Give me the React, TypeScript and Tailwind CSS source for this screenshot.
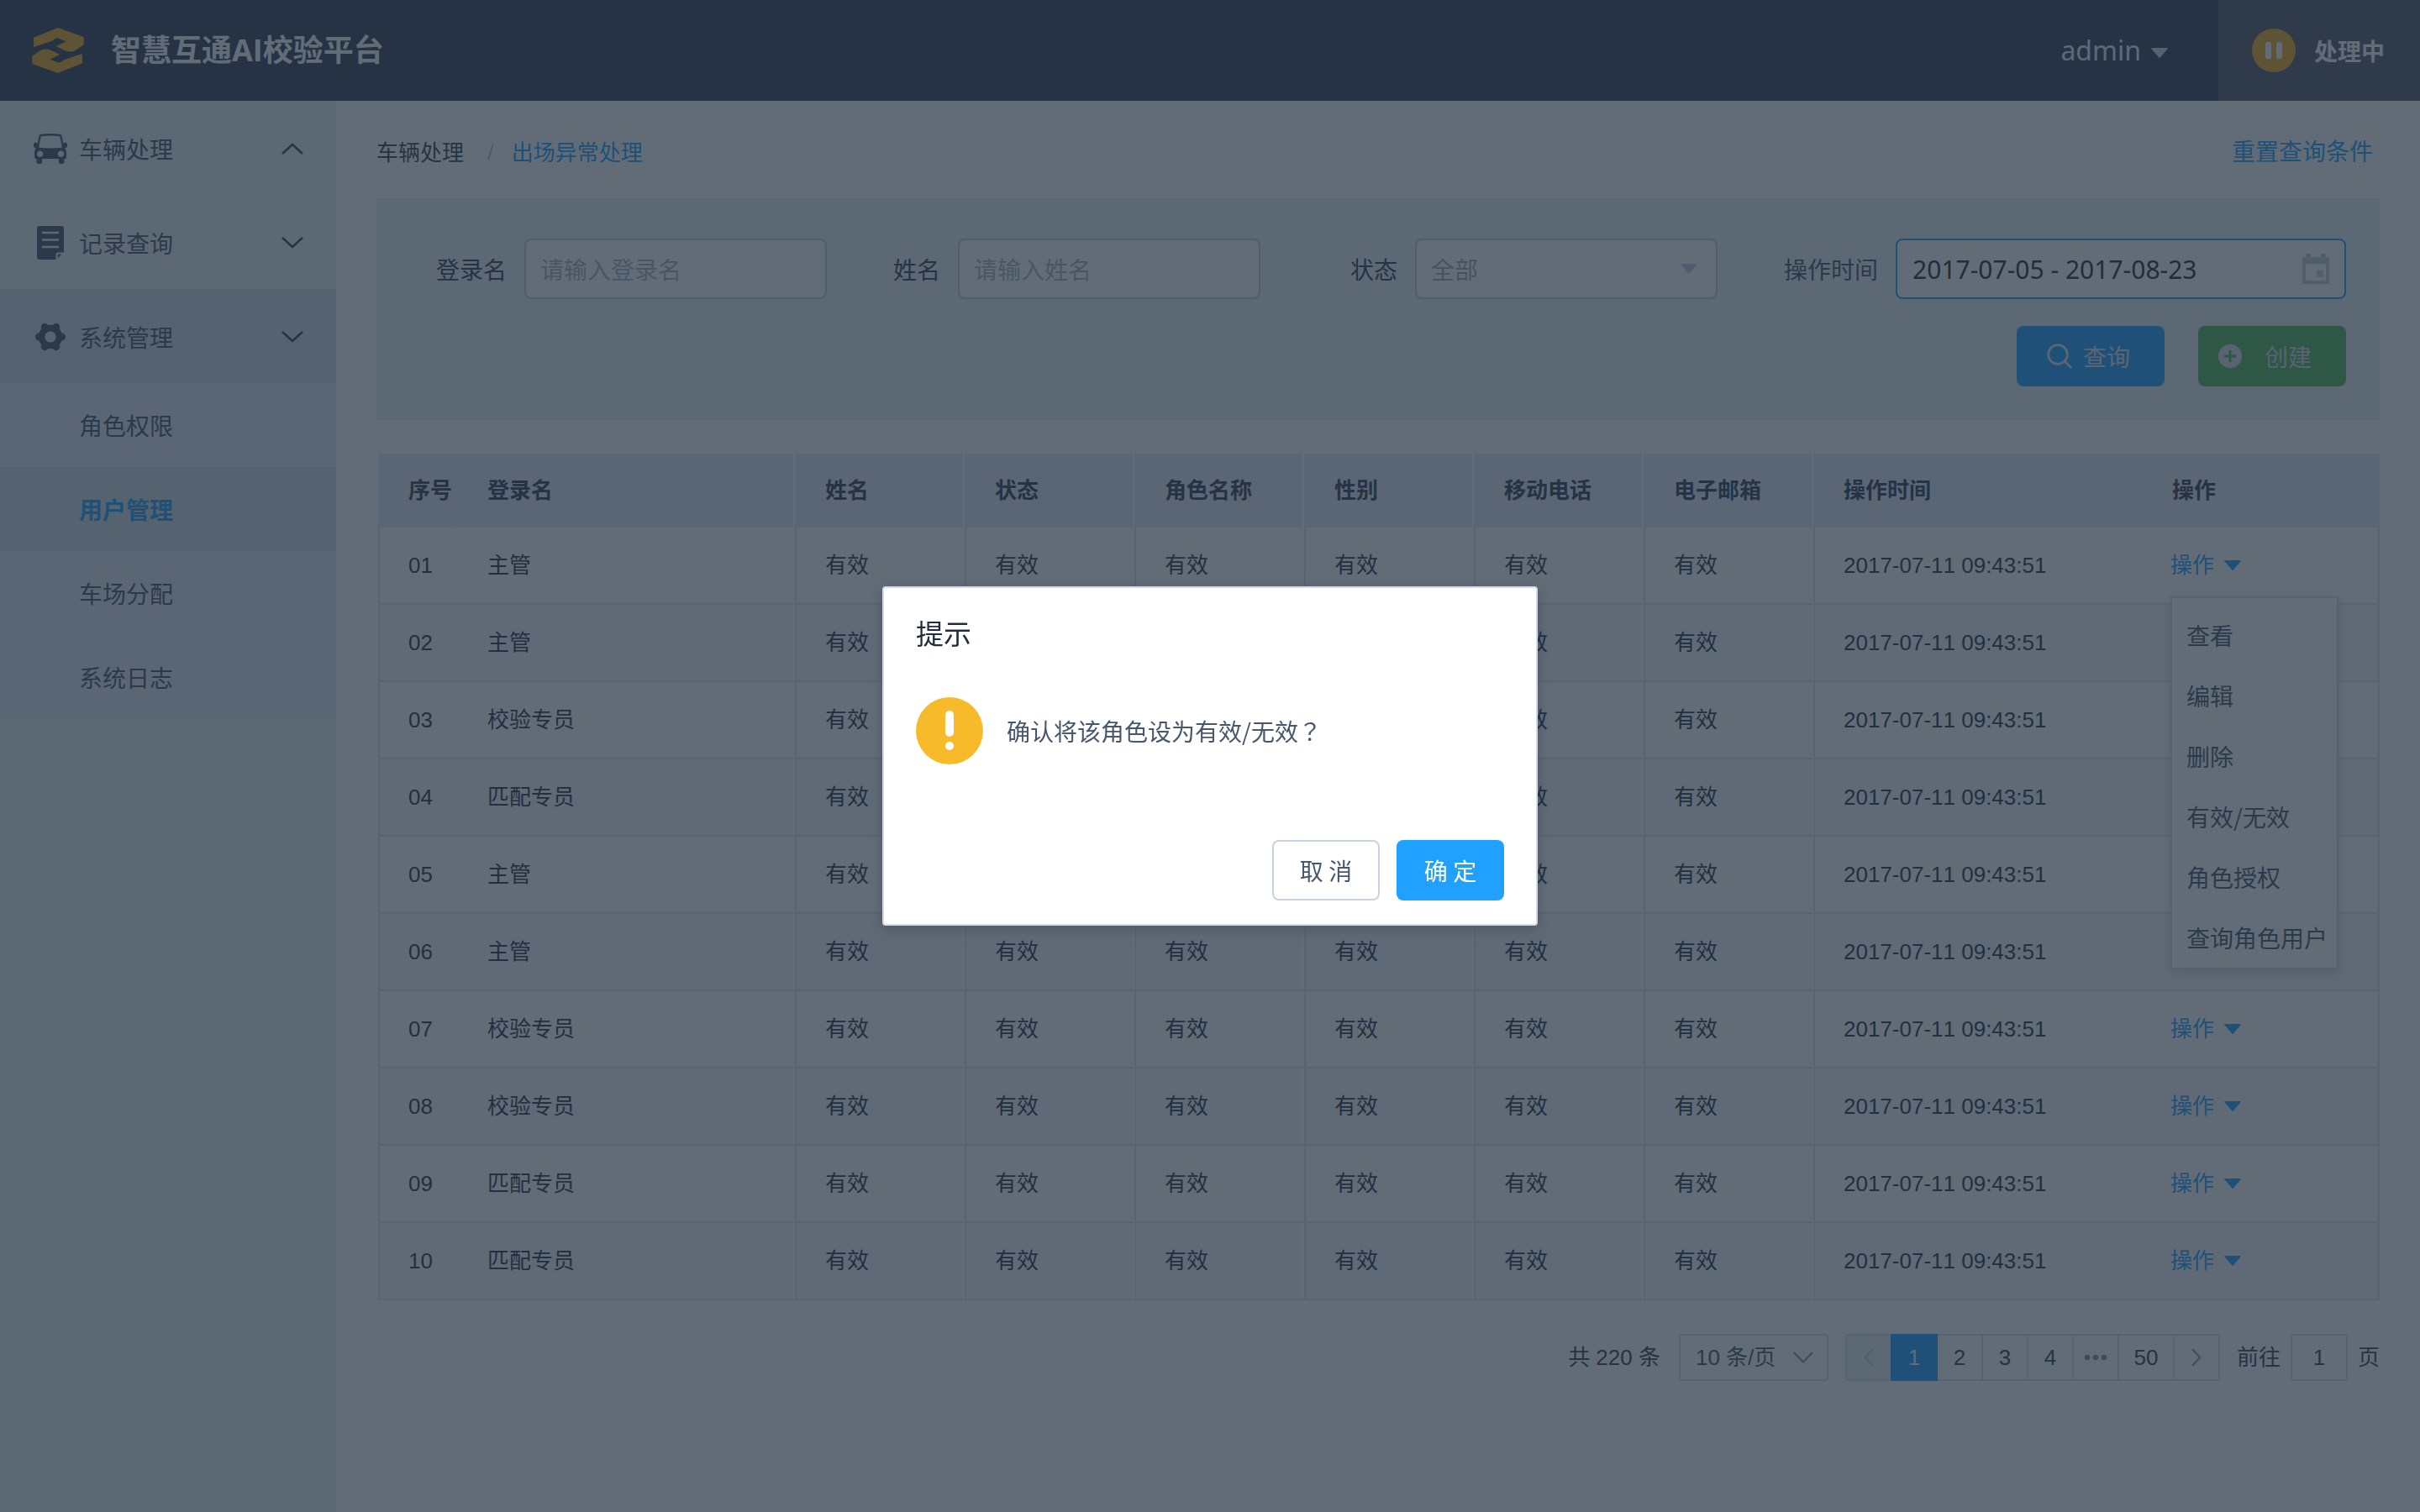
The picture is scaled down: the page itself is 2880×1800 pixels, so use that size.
import React from 'react';

const CJK = "font-['Noto_Sans_CJK_SC',sans-serif]";
const LATIN = "font-['Liberation_Sans','Noto_Sans_CJK_SC',sans-serif] [font-kerning:none]";

function Logo() {
  const hand =
    'M120 137 L207 102 L299 135 L299 163 L266 185 Q250 190 232 184 L200 168 L236 151 L205 139 Q196 141 188 148 L160 158 L120 171 Z';
  return (
    <svg viewBox="114 102 186 162" className="h-[54px] w-[62px]" fill="#f0ac23" aria-hidden="true">
      <path d={hand} />
      <path d={hand} transform="rotate(180 207 183)" />
    </svg>
  );
}

function CarIcon() {
  return (
    <svg viewBox="0 0 40 36" className="h-9 w-10" fill="#48576a" aria-hidden="true">
      <path
        fillRule="evenodd"
        d="M9 .8 Q20 -.6 31 .8 Q33 1 33.600 3 L35.600 12 Q36 10.500 38 10.500 Q40 10.500 40 13 V15 Q40 17 38 17.200 H37 Q39 19 39 22 V28.500 Q39 30 37.500 30 H36.500 V34 Q36.500 36 34.500 36 H31.500 Q29.800 36 29.800 34 V30 H10.200 V34 Q10.200 36 8.500 36 H5.500 Q3.500 36 3.500 34 V30 H2.500 Q1 30 1 28.500 V22 Q1 19 3 17.200 H2 Q0 17 0 15 V13 Q0 10.500 2 10.500 Q4 10.500 4.400 12 L6.400 3 Q7 1 9 .8 Z M9.300 3.200 Q8.700 3.300 8.500 4 L6.200 16.500 Q20 18.500 33.800 16.500 L31.500 4 Q31.300 3.300 30.700 3.200 Q20 1.800 9.300 3.200 Z M7.600 20.500 A3.700 3.700 0 1 0 7.700 20.500 Z M32.400 20.500 A3.700 3.700 0 1 0 32.500 20.500 Z"
      />
    </svg>
  );
}

function RecordIcon() {
  return (
    <svg viewBox="0 0 32 40" className="mx-1 h-10 w-8" aria-hidden="true">
      <path d="M3 0 H29 Q32 0 32 3 V31.500 H25 Q22.500 31.500 22.500 34 V40 H3 Q0 40 0 37 V3 Q0 0 3 0 Z" fill="#48576a" />
      <path d="M24.500 38.500 V35 Q24.500 33.500 26 33.500 H29.500 Z" fill="#48576a" />
      <path d="M6 8 H26 M6 16.500 H26 M6 25 H26" stroke="#eff2f7" strokeWidth="2.600" />
    </svg>
  );
}

function GearIcon() {
  return (
    <svg viewBox="-20 -18 40 36" className="h-9 w-10" stroke="#48576a" fill="none" aria-hidden="true">
      <circle r="10.400" strokeWidth="7.600" />
      {[0, 60, 120, 180, 240, 300].map((a) => (
        <path key={a} d="M12.500 0 H13.500" strokeWidth="9" strokeLinecap="round" transform={`rotate(${a})`} />
      ))}
    </svg>
  );
}

function Chevron({ up = false }: { up?: boolean }) {
  return (
    <svg viewBox="0 0 26 14" className="h-3.5 w-[26px]" fill="none" stroke="#324157" strokeWidth="2.400" aria-hidden="true">
      <path d={up ? 'M1 13 L13 2 L25 13' : 'M1 1 L13 12 L25 1'} />
    </svg>
  );
}

function Caret({ className }: { className: string }) {
  return (
    <svg viewBox="0 0 20 12" className={className} fill="currentColor" aria-hidden="true">
      <path d="M1 0 H19 Q20.500 0 19.500 1.200 L11 11.300 Q10 12.400 9 11.300 L.5 1.200 Q-.5 0 1 0 Z" />
    </svg>
  );
}

const MENU = [
  { label: '车辆处理', Icon: CarIcon, up: true, active: false },
  { label: '记录查询', Icon: RecordIcon, up: false, active: false },
  { label: '系统管理', Icon: GearIcon, up: false, active: true },
];
const SUBMENU = ['角色权限', '用户管理', '车场分配', '系统日志'];

function Sidebar() {
  return (
    <nav className="w-[400px] shrink-0 bg-[#eff2f7] text-[28px] text-[#48576a]">
      {MENU.map(({ label, Icon, up, active }) => (
        <button
          key={label}
          type="button"
          className={`flex h-28 w-full items-center pt-0.5 pr-[39px] pl-10 ${active ? 'bg-[#d3dfe6]' : ''}`}
        >
          <Icon />
          <span className="ml-3.5 flex-1 text-left">{label}</span>
          <Chevron up={up} />
        </button>
      ))}
      <div className="bg-[#e5e9f2]">
        {SUBMENU.map((label) => (
          <a
            key={label}
            href="#"
            className={`flex h-[100px] items-center pl-[94px] ${
              label === '用户管理' ? 'bg-[#d3dfe6] font-bold text-[#20a0ff]' : ''
            }`}
          >
            {label}
          </a>
        ))}
      </div>
    </nav>
  );
}

function Header() {
  return (
    <header className="flex h-[120px] items-stretch bg-[#324157] text-white">
      <div className="flex flex-1 items-center pl-[38px]">
        <Logo />
        <h1 className="ml-8 font-['Open_Sans','Noto_Sans_CJK_SC',sans-serif] text-[36px] font-bold">智慧互通AI校验平台</h1>
      </div>
      <button
        type="button"
        className="mr-[60px] flex items-center gap-3 font-['Noto_Sans',sans-serif] text-[32px] text-[#eff2f7]"
      >
        admin
        <Caret className="mt-1.5 h-3 w-5 text-[#d3dce6]" />
      </button>
      <div className="flex w-60 items-center bg-[#545c6c] pl-10">
        <svg viewBox="0 0 52 52" className="size-13" aria-hidden="true">
          <circle cx="26" cy="26" r="26" fill="#f0ac23" />
          <rect x="16" y="16" width="7" height="20" rx="2.500" fill="#fff" />
          <rect x="29" y="16" width="7" height="20" rx="2.500" fill="#fff" />
        </svg>
        <span className="ml-[22px] text-[28px] font-bold">处理中</span>
      </div>
    </header>
  );
}

function Filters() {
  const field = 'h-[72px] w-[360px] rounded-lg border-2 border-[#c0ccda] bg-white px-[17px] placeholder:text-[#a5b3c6]';
  return (
    <form className="bg-[#eff2f7] pt-12 pr-10 pb-10 pl-[71px] text-[28px] text-[#324157]">
      <div className="flex items-center">
        <label htmlFor="login" className="mr-[21px]">登录名</label>
        <input id="login" placeholder="请输入登录名" className={field} />
        <label htmlFor="name" className="mr-[21px] ml-[79px]">姓名</label>
        <input id="name" placeholder="请输入姓名" className={field} />
        <label htmlFor="status" className="mr-[21px] ml-[107px]">状态</label>
        <div className="relative">
          <select id="status" className={`${field} appearance-none text-[#99a9bf]`}>
            <option>全部</option>
          </select>
          <Caret className="pointer-events-none absolute top-[30px] right-6 h-3 w-5 text-[#c0ccda]" />
        </div>
        <label htmlFor="period" className="mr-[21px] ml-[79px] text-[#48576a]">操作时间</label>
        <div className="relative flex-1">
          <input
            id="period"
            defaultValue="2017-07-05 - 2017-08-23"
            className="h-[72px] w-full rounded-lg border-2 border-[#20a0ff] bg-white px-[18px] font-['Noto_Sans',sans-serif] text-[30px] text-[#1f2d3d]"
          />
          <svg viewBox="0 0 32 36" className="pointer-events-none absolute top-[18px] right-5 h-9 w-8" fill="#c0ccda" aria-hidden="true">
            <path
              fillRule="evenodd"
              d="M4 0 H10 V4 H22 V0 H28 V4 H30 Q32 4 32 6 V34 Q32 36 30 36 H2 Q0 36 0 34 V6 Q0 4 2 4 H4 Z M4 12 V32 H28 V12 Z"
            />
            <rect x="17" y="20" width="8" height="8" />
          </svg>
        </div>
      </div>
      <div className="mt-8 flex justify-end gap-10 text-[#e5e9f2]">
        <button type="button" className="flex h-[72px] w-44 items-center rounded-lg bg-[#20a0ff] pl-9">
          <svg viewBox="0 0 30 30" className="size-[30px]" fill="none" stroke="currentColor" strokeWidth="2.800" aria-hidden="true">
            <circle cx="13" cy="13" r="11.300" />
            <path d="M21 21 L29 29" />
          </svg>
          <span className="ml-[13px]">查询</span>
        </button>
        <button type="button" className="flex h-[72px] w-44 items-center rounded-lg bg-[#53b85a] pl-6 text-[#dbe1ea]">
          <svg viewBox="0 0 28 28" className="size-7" aria-hidden="true">
            <circle cx="14" cy="14" r="14" fill="currentColor" />
            <path d="M14 7 V21 M7 14 H21" stroke="#53b85a" strokeWidth="3" />
          </svg>
          <span className="ml-[27px]">创建</span>
        </button>
      </div>
    </form>
  );
}

const ROWS = ['主管', '主管', '校验专员', '匹配专员', '主管', '主管', '校验专员', '校验专员', '匹配专员', '匹配专员'];
const MIDDLE = ['姓名', '状态', '角色名称', '性别', '移动电话', '电子邮箱'];
const ACTIONS = ['查看', '编辑', '删除', '有效/无效', '角色授权', '查询角色用户'];

function ActionMenu() {
  return (
    <ul
      className={`absolute top-[55px] left-0 z-10 w-[200px] border-2 border-[#d3dce6] bg-white pt-2 text-[28px] text-[#48576a] shadow-[0_4px_12px_rgba(31,45,61,0.2)] ${CJK}`}
    >
      {ACTIONS.map((label) => (
        <li key={label}>
          <button type="button" className="flex h-[72px] w-full items-center pl-[17px] whitespace-nowrap">
            {label}
          </button>
        </li>
      ))}
    </ul>
  );
}

function UserTable() {
  const th = 'border-r-2 border-white pl-9 text-left';
  const td = 'border-b-2 border-b-[#dde4ec] pl-[34px] border-l-2 border-l-[#dde4ec] border-r-2 border-r-white';
  return (
    <table
      className={`mt-10 ml-0.5 w-[calc(100%-2px)] table-fixed border-separate border-spacing-0 text-[26px] text-[#253446] ${LATIN}`}
    >
      <colgroup>
        <col className="w-[94px]" />
        <col className="w-[402px]" />
        {MIDDLE.map((m) => (
          <col key={m} className="w-[202px]" />
        ))}
        <col className="w-[391px]" />
        <col />
      </colgroup>
      <thead>
        <tr className="h-[88px] bg-[#e5e9f2] text-[#324157]">
          <th className="pl-9 text-left">序号</th>
          <th className={th}>登录名</th>
          {MIDDLE.map((m) => (
            <th key={m} className={th}>{m}</th>
          ))}
          <th className="pl-9 text-left">操作时间</th>
          <th className="pl-9 text-left">操作</th>
        </tr>
      </thead>
      <tbody>
        {ROWS.map((role, i) => (
          <tr key={i} className="h-[92px] even:bg-[#f6f8fb]">
            <td className="border-r border-b-2 border-l-2 border-r-[#f6f8fb] border-b-[#dde4ec] border-l-[#dde4ec] pl-[34px]">
              {String(i + 1).padStart(2, '0')}
            </td>
            <td className="border-r-2 border-b-2 border-r-white border-b-[#dde4ec] pl-9">{role}</td>
            {MIDDLE.map((m) => (
              <td key={m} className={td}>有效</td>
            ))}
            <td className="border-b-2 border-l-2 border-b-[#dde4ec] border-l-[#dde4ec] pl-[34px]">2017-07-11 09:43:51</td>
            <td className="border-r-2 border-b-2 border-r-[#dde4ec] border-b-[#dde4ec] pl-[34px]">
              <div className="relative flex">
                <button type="button" className="flex h-9 items-center gap-3 text-[#20a0ff]">
                  操作
                  <Caret className="h-3 w-5" />
                </button>
                {i === 0 && <ActionMenu />}
              </div>
            </td>
          </tr>
        ))}
      </tbody>
    </table>
  );
}

function Pagination() {
  const cell = 'flex h-14 w-[54px] items-center justify-center border-r-2 border-[#d3dce6]';
  return (
    <div className={`mt-10 flex items-center justify-end text-[26px] text-[#324157] ${LATIN}`}>
      <span>共 220 条</span>
      <div className="relative ml-[22px]">
        <select aria-label="每页条数" className="h-14 w-[178px] appearance-none rounded-sm border-2 border-[#d3dce6] bg-white pl-[18px] text-[#48576a]">
          <option>10 条/页</option>
        </select>
        <svg viewBox="0 0 24 14" className="pointer-events-none absolute top-[21px] right-[18px] h-3.5 w-6" fill="none" stroke="#8492a6" strokeWidth="2.200" aria-hidden="true">
          <path d="M1 1 L12 12.500 L23 1" />
        </svg>
      </div>
      <nav className="ml-5 flex h-14 items-center rounded-sm border-2 border-[#d3dce6] bg-white">
        <button type="button" aria-label="上一页" className="flex h-[52px] w-[52px] items-center justify-center bg-[#eff2f7]">
          <svg viewBox="0 0 12 22" className="h-[22px] w-3" fill="none" stroke="#c0ccda" strokeWidth="2.200">
            <path d="M11 1 L2 11 L11 21" />
          </svg>
        </button>
        <button type="button" className="flex h-14 w-14 items-center justify-center bg-[#20a0ff] text-white">1</button>
        <button type="button" className={cell}>2</button>
        <button type="button" className={cell}>3</button>
        <button type="button" className={cell}>4</button>
        <button type="button" aria-label="更多" className={cell}>
          <svg viewBox="0 0 28 8" className="h-2 w-7" fill="#8492a6">
            <circle cx="4" cy="4" r="3.300" />
            <circle cx="14" cy="4" r="3.300" />
            <circle cx="24" cy="4" r="3.300" />
          </svg>
        </button>
        <button type="button" className="flex h-14 w-[66px] items-center justify-center border-r-2 border-[#d3dce6]">50</button>
        <button type="button" aria-label="下一页" className="flex h-14 w-[52px] items-center justify-center">
          <svg viewBox="0 0 12 22" className="h-[22px] w-3" fill="none" stroke="#8492a6" strokeWidth="2.200">
            <path d="M1 1 L10 11 L1 21" />
          </svg>
        </button>
      </nav>
      <label htmlFor="jump" className="ml-5">前往</label>
      <input
        id="jump"
        defaultValue="1"
        className="mx-3 h-14 w-[68px] rounded-sm border-2 border-[#d3dce6] bg-white text-center"
      />
      <span>页</span>
    </div>
  );
}

function ConfirmDialog() {
  return (
    <div className="fixed inset-0 z-50 flex items-center justify-center bg-[#1f2d3d]/70">
      <div
        role="dialog"
        aria-modal="true"
        aria-labelledby="dialog-title"
        className="w-[780px] rounded border-2 border-[#d3dce6] bg-white px-[38px] pt-7 pb-7 text-[28px] text-[#48576a] shadow-[0_4px_16px_rgba(31,45,61,0.3)]"
      >
        <h2 id="dialog-title" className="text-[33px] leading-[50px] text-[#1f2d3d]">提示</h2>
        <div className="mt-[52px] flex items-center">
          <svg viewBox="0 0 80 80" className="size-20" aria-hidden="true">
            <circle cx="40" cy="40" r="40" fill="#f7ba2a" />
            <rect x="35" y="16" width="10" height="31" rx="5" fill="#fff" />
            <circle cx="40" cy="58" r="5" fill="#fff" />
          </svg>
          <p className="ml-7">
            确认将该角色设为有效/无效<span lang="ja" className="font-['Noto_Sans_CJK_JP',sans-serif]">？</span>
          </p>
        </div>
        <div className="mt-[90px] flex justify-end gap-5">
          <button type="button" className="h-[72px] w-32 rounded-lg border-2 border-[#c9d3df]">取 消</button>
          <button type="button" className="h-[72px] w-32 rounded-lg bg-[#20a0ff] text-white">确 定</button>
        </div>
      </div>
    </div>
  );
}

export default function App() {
  return (
    <div className={`flex min-h-screen flex-col bg-white ${CJK}`}>
      <Header />
      <div className="flex flex-1">
        <Sidebar />
        <main className="min-w-0 flex-1 px-12">
          <div className="flex h-[116px] items-center justify-between pt-0.5 pr-2">
            <div className="flex items-center text-[26px]">
              <a href="#" className="text-[#324157]">车辆处理</a>
              <span className="mr-[21px] ml-7 text-xl text-[#99a9bf]">/</span>
              <a href="#" className="text-[#20a0ff]">出场异常处理</a>
            </div>
            <a href="#" className="text-[28px] text-[#20a0ff]">重置查询条件</a>
          </div>
          <Filters />
          <UserTable />
          <Pagination />
        </main>
      </div>
      <ConfirmDialog />
    </div>
  );
}
